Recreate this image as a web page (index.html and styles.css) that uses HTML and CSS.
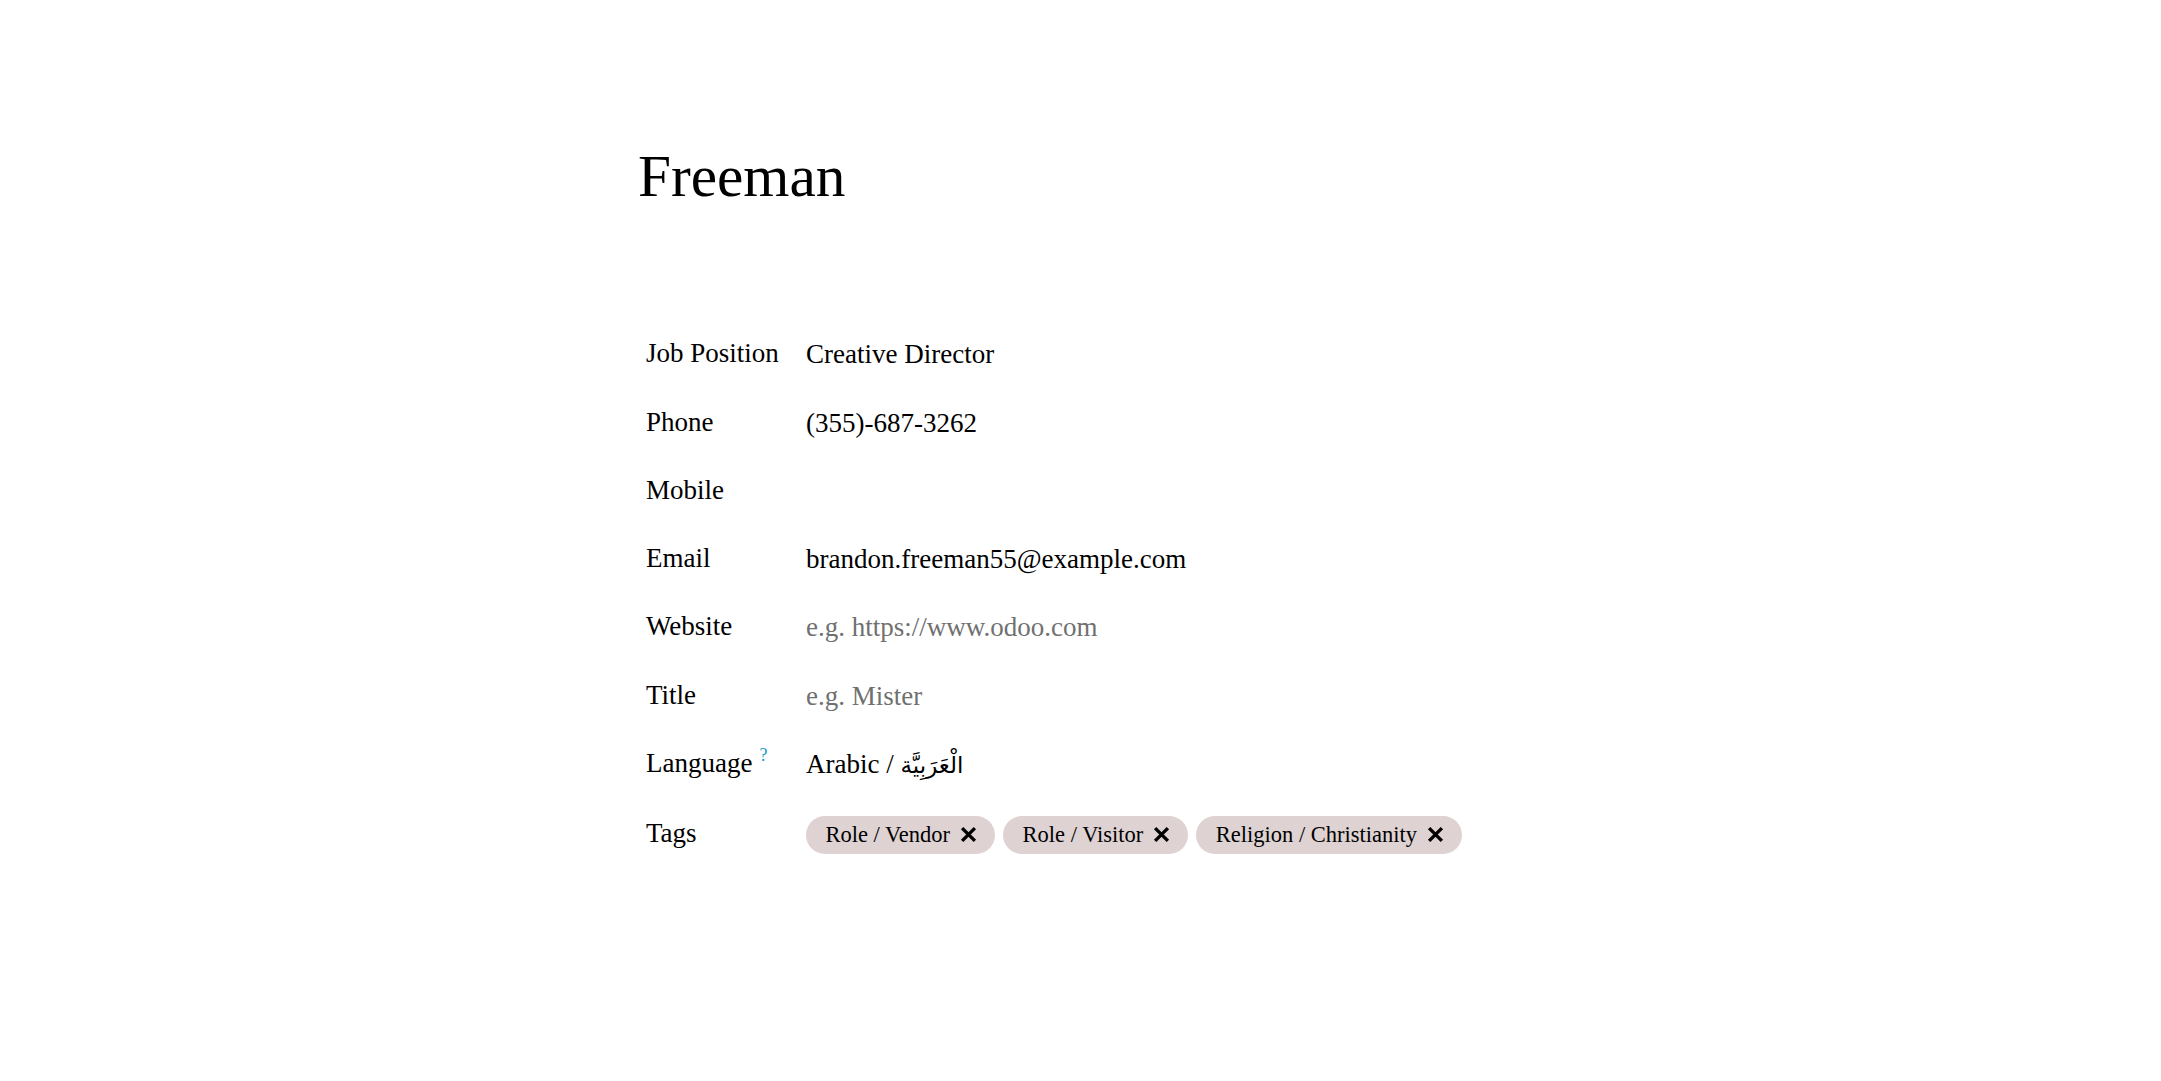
FILE: index.html
```html
<!DOCTYPE html>
<html lang="en">
<head>
<meta charset="utf-8">
<title>Freeman</title>
<link rel="stylesheet" href="styles.css">
</head>
<body>
<div class="sheet">
  <h1 class="name">Freeman</h1>
  <div class="form">
    <div class="label">Job Position</div>
    <div class="value">Creative Director</div>

    <div class="label">Phone</div>
    <div class="value">(355)-687-3262</div>

    <div class="label">Mobile</div>
    <div class="value"></div>

    <div class="label">Email</div>
    <div class="value">brandon.freeman55@example.com</div>

    <div class="label">Website</div>
    <div class="value placeholder">e.g. https://www.odoo.com</div>

    <div class="label">Title</div>
    <div class="value placeholder">e.g. Mister</div>

    <div class="label">Language<sup class="help">?</sup></div>
    <div class="value">Arabic / <span class="ar" lang="ar">الْعَرَبِيَّة</span></div>

    <div class="label">Tags</div>
    <div class="value tags">
      <span class="tag">Role / Vendor<svg class="x" viewBox="0 0 16 16" width="17" height="17"><path d="M2 2L14 14M14 2L2 14"/></svg></span>
      <span class="tag">Role / Visitor<svg class="x" viewBox="0 0 16 16" width="17" height="17"><path d="M2 2L14 14M14 2L2 14"/></svg></span>
      <span class="tag">Religion / Christianity<svg class="x" viewBox="0 0 16 16" width="17" height="17"><path d="M2 2L14 14M14 2L2 14"/></svg></span>
    </div>
  </div>
</div>
</body>
</html>
```

FILE: styles.css
```css
html, body {
  margin: 0;
  padding: 0;
  background: #ffffff;
}

body {
  font-family: "Liberation Serif", "Times New Roman", "DejaVu Sans", serif;
  color: #000000;
  min-height: 1081px;
}

.sheet {
  width: 885px;
  margin: 0 auto;
  padding-top: 141px;
  padding-bottom: 120px;
}

.name {
  margin: 0;
  font-size: 59.3px;
  line-height: 70px;
  font-weight: normal;
}

.form {
  margin: 122px 0 0 8px;
  display: grid;
  grid-template-columns: 160px 1fr;
  grid-auto-rows: minmax(40px, auto);
  row-gap: 27.5px;
  font-size: 27px;
  line-height: 40px;
}

.label {
  white-space: nowrap;
}

.value {
  padding-top: 1px;
  white-space: nowrap;
}

.placeholder {
  color: #707070;
}

.ar {
  font-family: "DejaVu Sans", sans-serif;
  font-size: 23px;
}

.help {
  color: #1a9bc9;
  font-size: 18px;
  line-height: 0;
  padding-left: 7px;
  vertical-align: 11px;
}

.tags {
  display: flex;
  gap: 8px;
  padding-top: 0;
  align-items: flex-start;
}

.tag {
  display: inline-flex;
  align-items: center;
  height: 38px;
  margin-top: 3px;
  padding: 0 18px 0 19.5px;
  border-radius: 19px;
  background: #ded2d2;
  font-size: 22.5px;
  line-height: 38px;
}

.x {
  width: 17px;
  height: 17px;
  margin-left: 10px;
  fill: none;
  stroke: #000000;
  stroke-width: 3.2;
  stroke-linecap: butt;
}
```
